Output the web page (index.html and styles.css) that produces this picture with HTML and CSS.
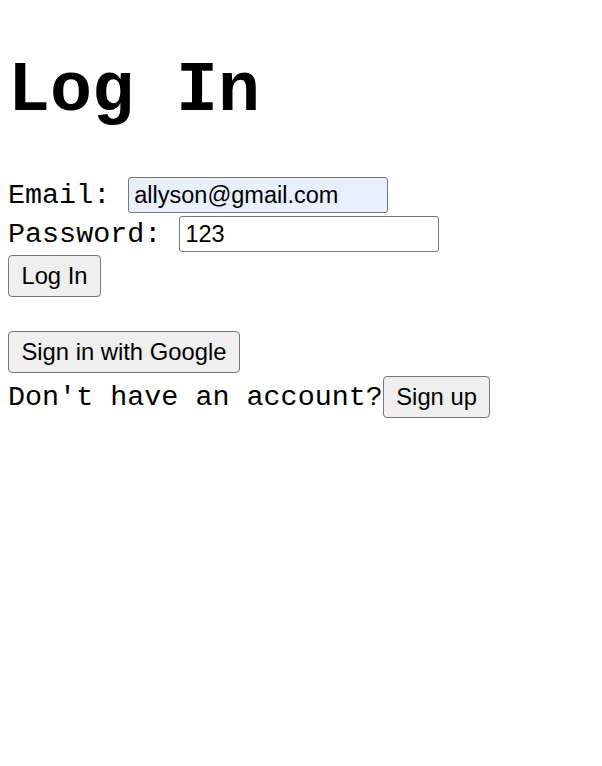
FILE: index.html
```html
<!DOCTYPE html>
<html>
<head>
<meta charset="utf-8">
<link rel="stylesheet" href="styles.css">
</head>
<body>
<h1 class="title">Log In</h1>
<form class="login">
  <div class="row"><span class="label">Email: </span><input class="field autofill" type="email" value="allyson@gmail.com"></div>
  <div class="row"><span class="label">Password: </span><input class="field" type="text" value="123"></div>
  <div class="row row-btn"><button class="btn" type="button">Log In</button></div>
</form>
<div class="google"><button class="btn" type="button">Sign in with Google</button></div>
<div class="signup"><span class="label">Don't have an account?</span><button class="btn" type="button">Sign up</button></div>
</body>
</html>
```

FILE: styles.css
```css
html, body {
  background: #ffffff;
}
body {
  margin: 8px;
  font-family: "Nimbus Mono PS", "Nimbus Mono L", "Courier New", "Liberation Mono", monospace;
  font-size: 28.4px;
  color: #000;
}
.title {
  font-size: 70px;
  font-weight: bold;
  margin: 44px 0 44px 0;
  line-height: normal;
}
.login {
  margin: 0;
  display: flex;
  flex-direction: column;
}
.row {
  display: flex;
  align-items: baseline;
  padding: 2px 0 1px 0;
}
.row-btn {
  padding-top: 2px;
}
.label {
  white-space: pre;
}
.field {
  box-sizing: border-box;
  width: 260px;
  height: 36px;
  margin: 0 0 0 1px;
  padding: 0 5px;
  border: 1.5px solid #767676;
  border-radius: 3px;
  font-family: "Liberation Sans", Arial, sans-serif;
  font-size: 23.5px;
  color: #000;
  background: #fff;
  outline: none;
}
.field.autofill {
  background: #e8f0fe;
}
.btn {
  font-family: "Liberation Sans", Arial, sans-serif;
  font-size: 23.8px;
  line-height: normal;
  padding: 6px 12.4px;
  border: 1.5px solid #767676;
  border-radius: 4px;
  background: #efefef;
  color: #000;
  margin: 0;
}
.google {
  margin-top: 33px;
}
.signup {
  display: flex;
  align-items: baseline;
  margin-top: 3px;
}
```
